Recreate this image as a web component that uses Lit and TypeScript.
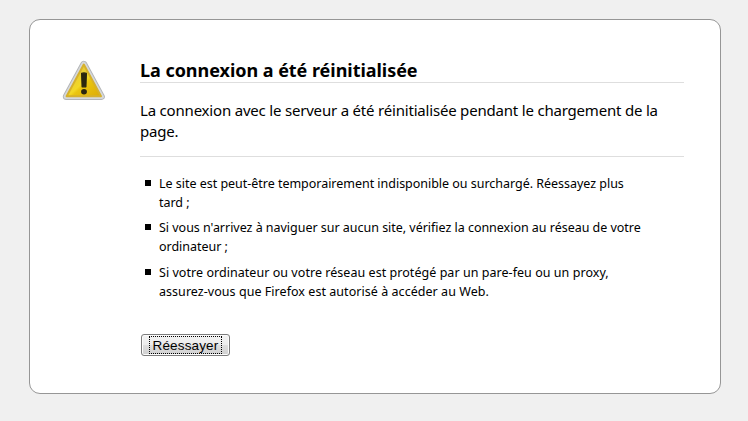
import { LitElement, html, css, svg } from "lit";
import { customElement } from "lit/decorators.js";

@customElement("warning-icon")
class WarningIcon extends LitElement {
  static styles = css`
    :host { display: block; flex: none; width: 44px; height: 42px; }
    svg { display: block; }
  `;
  render() {
    return html`<svg width="44" height="42" viewBox="0 0 44 42">
      ${svg`
      <defs>
        <linearGradient id="fill" x1="0" y1="0" x2="1" y2="1">
          <stop offset="0.2" stop-color="#e3c640"/><stop offset="0.52" stop-color="#f3d824"/><stop offset="0.58" stop-color="#eac50f"/><stop offset="1" stop-color="#dcab06"/>
        </linearGradient>
      </defs>
      <path d="M21.8 4.2 L39.4 36.6 H4.2 Z" fill="#c4c6c8" stroke="#b2b4b6" stroke-width="6.8" stroke-linejoin="round"/>
      <path d="M21.8 4.2 L39.4 36.6 H4.2 Z" fill="none" stroke="#d6d8da" stroke-width="5" stroke-linejoin="round"/>
      <path d="M21.8 4.6 L39 36.2 H4.6 Z" fill="url(#fill)" stroke="#d6b12c" stroke-width="2" stroke-linejoin="round"/>
      <path d="M19.6 13.4 Q22 12.4 24.4 13.4 L23.9 26.8 H20.1 Z" fill="#2a260f" stroke="#2a260f" stroke-width="1.2" stroke-linejoin="round"/>
      <ellipse cx="22" cy="31.8" rx="2.9" ry="2.7" fill="#2a260f"/>`}
    </svg>`;
  }
}

@customElement("app-root")
class AppRoot extends LitElement {
  static styles = css`
    :host {
      display: block; box-sizing: border-box; height: 421px; overflow: hidden;
      padding: 19px 27px 27px 29px; background: #f0f0f0; color: #000;
      font-family: "Noto Sans", sans-serif;
    }
    .card {
      box-sizing: border-box; height: 375px; display: flex; gap: 34px;
      padding: 40px 36px 0 32px; background: #fff;
      border: 1px solid #969696; border-radius: 11px;
    }
    .body { width: 544px; flex: none; }
    .line { display: block; white-space: nowrap; }
    h1 {
      margin: 0; height: 22px; font-size: 18px; font-weight: 700; line-height: 20px;
      border-bottom: 1px solid #dedede; letter-spacing: -0.04px;
    }
    .lead {
      height: 56px; padding-top: 17px; font-size: 15px; line-height: 21px;
      border-bottom: 1px solid #dedede; letter-spacing: -0.195px;
    }
    ul {
      list-style: none; margin: 17px 0 0; padding: 0; display: flex;
      flex-direction: column; gap: 6.4px; font-size: 12.5px; line-height: 19px;
    }
    li { display: flex; gap: 8px; padding-left: 5px; }
    li:nth-child(-n+2) { letter-spacing: -0.025px; }
    li:nth-child(3) { letter-spacing: 0.045px; }
    .bullet { flex: none; width: 6px; height: 6px; margin-top: 6px; background: #000; }
    button {
      display: block; box-sizing: border-box; width: 89px; height: 22px; padding: 1px;
      margin: 33px 0 0 1px; border: 1px solid #7c7c7c; border-radius: 3px;
      background: linear-gradient(#f3f3f3 0%, #ebebeb 49%, #dedede 51%, #d0d0d0 100%);
      box-shadow: inset 0 0 0 1px #fbfbfb;
      font: 13.5px/18px "Liberation Sans", Arial, sans-serif; letter-spacing: 0.15px; color: #000;
    }
    .focus {
      display: block; box-sizing: border-box; width: 73px; height: 18px;
      margin: 0 auto; border: 1px dotted #000; white-space: nowrap;
    }
  `;
  private items = [
    ["Le site est peut-être temporairement indisponible ou surchargé. Réessayez plus", "tard ;"],
    ["Si vous n'arrivez à naviguer sur aucun site, vérifiez la connexion au réseau de votre", "ordinateur ;"],
    ["Si votre ordinateur ou votre réseau est protégé par un pare-feu ou un proxy,", "assurez-vous que Firefox est autorisé à accéder au Web."],
  ];
  render() {
    return html`<main class="card">
      <warning-icon></warning-icon>
      <div class="body">
        <h1>La connexion a été réinitialisée</h1>
        <div class="lead">
          <span class="line">La connexion avec le serveur a été réinitialisée pendant le chargement de la</span>
          <span class="line">page.</span>
        </div>
        <ul>
          ${this.items.map((lines) => html`<li><span class="bullet"></span><div>
            ${lines.map((t) => html`<span class="line">${t}</span>`)}</div></li>`)}
        </ul>
        <button><span class="focus">Réessayer</span></button>
      </div>
    </main>`;
  }
}
